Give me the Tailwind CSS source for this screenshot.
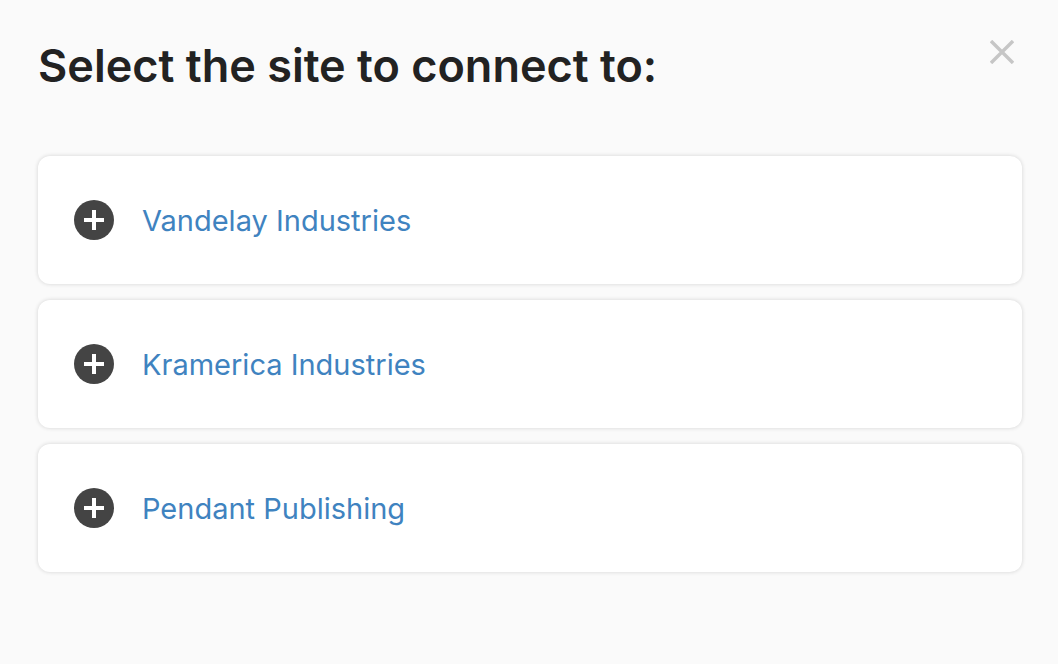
<!DOCTYPE html>
<html lang="en">
<head>
<meta charset="utf-8">
<meta name="viewport" content="width=device-width, initial-scale=1">
<title>Select a site</title>
<script src="https://cdn.jsdelivr.net/npm/@tailwindcss/browser@4"></script>
</head>
<body class="min-h-screen bg-[#fafafa] font-['Inter',sans-serif]">
<main class="pt-9 pr-9 pl-[38px]">
  <header class="flex items-start justify-between">
    <h1 class="text-[45px] leading-[60px] font-semibold text-[#222222]">Select the site to connect to:</h1>
    <button type="button" aria-label="Close" class="mr-1 flex size-8 items-center justify-center text-[#c6c6c6]">
      <svg class="size-6" viewBox="0 0 24 24" fill="none" stroke="currentColor" stroke-width="3.4" aria-hidden="true"><path d="M1 1 23 23M23 1 1 23"/></svg>
    </button>
  </header>
  <ul class="mt-15 flex flex-col gap-4">
    <li><a href="#" class="flex h-32 items-center gap-7 rounded-xl bg-white px-9 text-[29px] text-[#3f83c0] shadow-[0_0_4px_rgba(0,0,0,0.16)]">
      <svg class="size-10 shrink-0" viewBox="0 0 40 40" aria-hidden="true"><circle cx="20" cy="20" r="20" fill="#444"/><path d="M20 10v20M10 20h20" stroke="#fff" stroke-width="4"/></svg>
      <span class="pt-0.5">Vandelay Industries</span></a></li>
    <li><a href="#" class="flex h-32 items-center gap-7 rounded-xl bg-white px-9 text-[29px] text-[#3f83c0] shadow-[0_0_4px_rgba(0,0,0,0.16)]">
      <svg class="size-10 shrink-0" viewBox="0 0 40 40" aria-hidden="true"><circle cx="20" cy="20" r="20" fill="#444"/><path d="M20 10v20M10 20h20" stroke="#fff" stroke-width="4"/></svg>
      <span class="pt-0.5">Kramerica Industries</span></a></li>
    <li><a href="#" class="flex h-32 items-center gap-7 rounded-xl bg-white px-9 text-[29px] text-[#3f83c0] shadow-[0_0_4px_rgba(0,0,0,0.16)]">
      <svg class="size-10 shrink-0" viewBox="0 0 40 40" aria-hidden="true"><circle cx="20" cy="20" r="20" fill="#444"/><path d="M20 10v20M10 20h20" stroke="#fff" stroke-width="4"/></svg>
      <span class="pt-0.5">Pendant Publishing</span></a></li>
  </ul>
</main>
</body>
</html>
